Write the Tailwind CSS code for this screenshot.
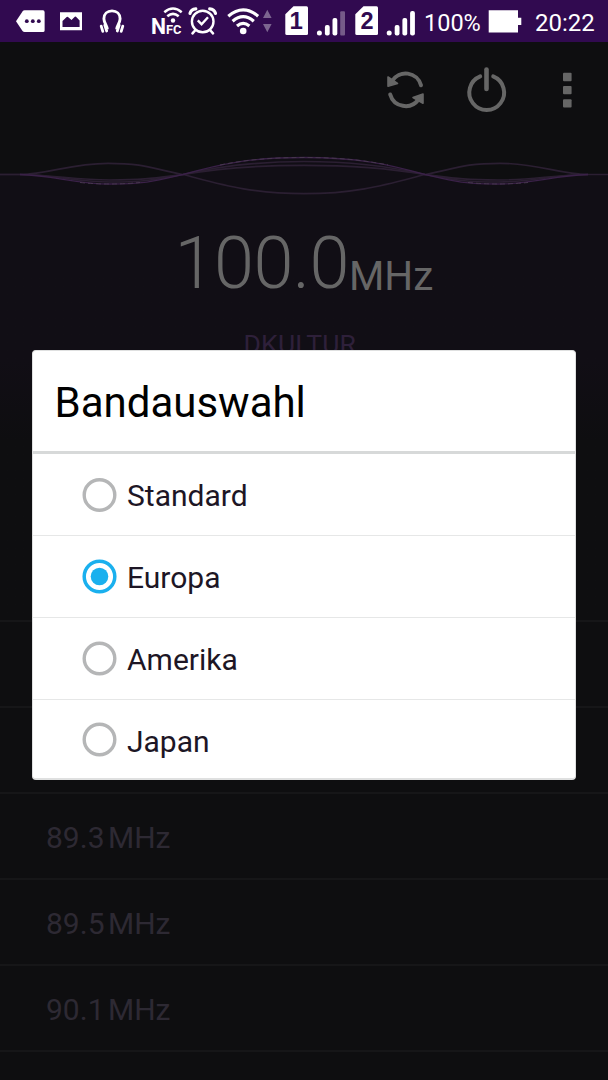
<!DOCTYPE html>
<html lang="de">
<head>
<meta charset="utf-8">
<title>UKW-Radio</title>
<script src="https://cdn.jsdelivr.net/npm/@tailwindcss/browser@4"></script>
</head>
<body class="w-[608px] h-[1080px] overflow-hidden bg-[#0e0e10] font-['Roboto',sans-serif]">
<div class="relative flex flex-col h-[1080px] overflow-hidden">
  <!-- Status bar -->
  <header class="flex h-[42px] shrink-0 bg-[#310a50] text-white">
    <svg class="shrink-0" width="140" height="42" viewBox="0 0 140 42" fill="none">
      <path d="M16 21.3 22.5 11.4Q23.3 10.3 24.6 10.3H43Q44.6 10.3 44.6 12V30.500Q44.600 32 43 32H24.600Q23.300 32 22.500 31Z" fill="#fff"/>
      <g fill="#310a50"><circle cx="26.800" cy="21.200" r="1.900"/><circle cx="32.800" cy="21.200" r="1.900"/><circle cx="38.800" cy="21.200" r="1.900"/></g>
      <path fill-rule="evenodd" d="M60 12.200H82V30.200H60ZM62.500 26.900H79.600V20.500L76 16.800Q75.400 16.300 74.800 16.800L71.500 20 68 17Q67.300 16.500 66.700 17L62.500 21Z" fill="#fff"/>
      <path d="M107.300 29.200C107.300 25.500 103.900 23 103.900 18.800C103.900 14 107.300 10.900 112 10.900S120.100 14 120.100 18.800C120.100 23 116.700 25.500 116.700 29.200" stroke="#fff" stroke-width="2.900"/>
      <path d="M104.800 25 106.700 31M101.200 26.200 102.800 31.400M119.200 25 117.300 31M122.800 26.200 121.200 31.400" stroke="#fff" stroke-width="2.800" stroke-linecap="round"/>
    </svg>
    <svg class="shrink-0" width="140" height="42" viewBox="140 0 140 42" fill="none" stroke="#fff">
      <text x="151" y="34" font-size="22" font-weight="700" fill="#fff" stroke="none" textLength="15" lengthAdjust="spacingAndGlyphs">N</text>
      <text x="166" y="34" font-size="13.500" font-weight="700" fill="#fff" stroke="none" textLength="15.500" lengthAdjust="spacingAndGlyphs">FC</text>
      <path d="M164.300 12.200Q173 4.800 181.700 12.200M167.300 16.300Q173 11.500 178.700 16.300" stroke-width="2.500"/>
      <circle cx="173" cy="20.500" r="2.200" fill="#fff" stroke="none"/>
      <circle cx="202.700" cy="21.500" r="10.800" stroke-width="2.400"/>
      <path d="M197.800 20.300 201.600 24.300 208 17.300" stroke-width="2.400"/>
      <path d="M195.500 30 192.500 33.300M210 30 213 33.300" stroke-width="2.600" stroke-linecap="round"/>
      <path d="M190 13.400Q191 9.300 195.800 8.900M215.500 13.400Q214.400 9.300 209.700 8.900" stroke-width="3.200" stroke-linecap="round"/>
      <path d="M228.300 16.200Q243.200 3.500 258.100 16.200M232.600 21.300Q243.200 12 253.800 21.300M237 26Q243.200 20.800 249.400 26" stroke-width="3.200"/>
      <circle cx="243.200" cy="31" r="3.300" fill="#fff" stroke="none"/>
      <path d="M263 18 267.300 9.800 271.600 18ZM263 24 267.300 32.200 271.600 24Z" fill="#7c6590" stroke="none"/>
    </svg>
    <svg class="shrink-0" width="144" height="42" viewBox="280 0 144 42" fill="#fff">
      <path d="M293.500 6.300H306.500Q308 6.300 308 7.800V33.500Q308 35 306.500 35H286.800Q285.300 35 285.300 33.500V14.300Z"/>
      <text x="296.300" y="29" font-size="24" font-weight="700" fill="#310a50" text-anchor="middle" font-family="Liberation Sans, sans-serif">1</text>
      <circle cx="319.400" cy="33" r="2.500"/>
      <rect x="324.900" y="25" width="4.800" height="10.500" rx="2"/><rect x="332.500" y="18" width="4.800" height="17.500" rx="2"/><rect x="340.200" y="11.300" width="4.800" height="24.200" rx="1" fill="#765b89"/>
      <path d="M363.500 6.300H376.500Q378 6.300 378 7.800V33.500Q378 35 376.500 35H356.800Q355.300 35 355.300 33.500V14.300Z"/>
      <text x="367" y="28.700" font-size="23.500" font-weight="700" fill="#310a50" text-anchor="middle" font-family="Liberation Sans, sans-serif">2</text>
      <circle cx="389.200" cy="33" r="2.500"/>
      <rect x="394.700" y="25" width="4.800" height="10.500" rx="2"/><rect x="402.400" y="18" width="4.800" height="17.500" rx="2"/><rect x="410.100" y="11" width="4.800" height="24.500" rx="2"/>
    </svg>
    <span class="w-[64px] text-[23.500px] leading-[46px] whitespace-nowrap">100%</span>
    <svg class="shrink-0" width="47" height="42" viewBox="488 0 47 42"><path d="M488.700 10.200H518V17.700H521.300V25H518V32.500H488.700Z" fill="#fff"/></svg>
    <span class="text-[24px] leading-[46px] whitespace-nowrap">20:22</span>
  </header>
  <!-- Toolbar -->
  <div class="flex h-[98px] shrink-0 justify-end">
    <svg width="238" height="98" viewBox="370 42 238 98" fill="none" stroke="#666" stroke-linecap="round">
      <path d="M392 81A16 16 0 0 1 421 85.200M390.200 94.500A16 16 0 0 0 418.500 99.500" stroke-width="4"/>
      <path d="M388 77V86.200L397.500 83.500ZM423 94V103.200L413 97.500Z" fill="#666" stroke-width="1.600" stroke-linejoin="round"/>
      <path d="M480.200 76.400A17.400 17.400 0 1 0 493.200 76.400" stroke-width="4"/>
      <path d="M486.500 69.500V89" stroke-width="4.600"/>
      <g fill="#666" stroke="none"><rect x="563" y="72.800" width="8.600" height="8.400" rx="1"/><rect x="563" y="85.900" width="8.600" height="8.400" rx="1"/><rect x="563" y="99.200" width="8.600" height="8.400" rx="1"/></g>
    </svg>
  </div>
  <!-- Wave -->
  <svg class="block shrink-0" width="608" height="80" viewBox="0 140 608 80" fill="none">
    <path d="M0 174.500H15C60 176 70 184 110 184C145 184 155 180 183 174.500C220 164 250 158 304 158S388 164 425 174.500C453 180 463 184 498 184C538 184 548 176 593 174.500H608V220H0Z" fill="#110e15"/>
    <g stroke="#2b1f32" stroke-width="1.700">
      <path d="M0 174.500H20C50 174 70 163.300 108 163.300S153 169 183 174.500C220 184 250 193.700 304 193.700S388 184 425 174.500C455 169 462 163.300 500 163.300S558 174 588 174.500H608"/>
      <path d="M0 174.500H20C55 175 75 180 110 180S155 178 183 174.500C220 168 255 165.300 304 165.300S388 168 425 174.500C453 178 463 180 498 180S553 175 588 174.500"/>
      <path d="M20 174.500C55 175 75 182 110 182S155 179.500 183 174.500C220 166 255 161.500 304 161.500S388 166 425 174.500C453 179.500 463 182 498 182S553 175 588 174.500"/>
    </g>
    <path d="M20 174.500C55 175.500 75 184 110 184S155 181 183 174.500C220 164 250 157.500 304 157.500S388 164 425 174.500C453 181 463 184 498 184S553 175.500 588 174.500" stroke="#3a2148" stroke-width="1.300"/>
    <path d="M220 165C245 160 270 157.500 304 157.500S363 160 388 165M80 182.500Q110 185.500 140 182.500M468 182.500Q498 185.500 528 182.500" stroke="#47374f" stroke-width="1" stroke-dasharray="5 3"/>
  </svg>
  <!-- Frequency -->
  <section class="flex flex-col items-start h-[400px] shrink-0 bg-linear-to-b from-[#110e15] from-35% to-[#0e0e10] to-55%">
    <div class="flex pl-[174.500px] h-[106px] text-[#666] whitespace-nowrap">
      <span class="w-[174.500px] text-[72px] leading-[88px] font-light tracking-[-0.5px]">100.0</span>
      <span class="pt-[10px] text-[40.500px] leading-[93px]">MHz</span>
    </div>
    <div class="pl-[243.500px] text-[26.500px] leading-[36px] tracking-[0.2px] text-[#2e203a]">DKULTUR</div>
  </section>
  <!-- Stations -->
  <ul class="flex flex-col text-[#2d2933] text-[30px]">
    <li class="h-[2px] bg-[#161618]"></li>
    <li class="h-[86px] border-b-2 border-[#161618]"></li>
    <li class="h-[86px] border-b-2 border-[#161618]"></li>
    <li class="flex h-[86px] shrink-0 items-center gap-1.5 border-b-2 border-[#161618] pl-[46px] pt-[2px]"><span class="w-[56px]">89.3</span><span>MHz</span></li>
    <li class="flex h-[86px] shrink-0 items-center gap-1.5 border-b-2 border-[#161618] pl-[46px] pt-[2px]"><span class="w-[56px]">89.5</span><span>MHz</span></li>
    <li class="flex h-[86px] shrink-0 items-center gap-1.5 border-b-2 border-[#161618] pl-[46px] pt-[2px]"><span class="w-[56px]">90.1</span><span>MHz</span></li>
  </ul>

  <!-- Dialog -->
  <div role="dialog" class="absolute left-[32px] top-[350px] flex h-[430px] w-[544px] flex-col overflow-hidden rounded-[4px] border border-[#dfe0e0] border-b-2 bg-white">
    <h1 class="h-[103px] shrink-0 border-b-[3px] border-[#d7d9d9] pl-[21.500px] text-[42px] leading-[103px] text-black">Bandauswahl</h1>
    <label class="flex h-[82px] shrink-0 items-center gap-2.5 border-b border-[#e6e7e7] pl-[49px] text-[30px] text-[#1d1625]">
      <svg class="w-[35px] shrink-0" height="35" viewBox="0 0 35 35" fill="none"><circle cx="17.500" cy="18" r="15.300" stroke="#b5b6b7" stroke-width="3.400"/></svg><span class="pt-[2px]">Standard</span></label>
    <label class="flex h-[82px] shrink-0 items-center gap-2.5 border-b border-[#e6e7e7] pl-[49px] text-[30px] text-[#1d1625]">
      <svg class="w-[35px] shrink-0" height="35" viewBox="0 0 35 35" fill="none"><circle cx="17.500" cy="17.500" r="15.300" stroke="#1ab0ee" stroke-width="3.500"/><circle cx="17.500" cy="17.500" r="8.800" fill="#1ab0ee"/></svg><span class="pt-[2px]">Europa</span></label>
    <label class="flex h-[81.500px] shrink-0 items-center gap-2.5 border-b border-[#e6e7e7] pl-[49px] text-[30px] text-[#1d1625]">
      <svg class="w-[35px] shrink-0" height="35" viewBox="0 0 35 35" fill="none"><circle cx="17.500" cy="17.500" r="15.300" stroke="#b5b6b7" stroke-width="3.400"/></svg><span class="pt-[3px]">Amerika</span></label>
    <label class="flex h-[80.500px] shrink-0 items-center gap-2.5 pl-[49px] text-[30px] text-[#1d1625]">
      <svg class="w-[35px] shrink-0" height="35" viewBox="0 0 35 35" fill="none"><circle cx="17.500" cy="17.500" r="15.300" stroke="#b5b6b7" stroke-width="3.400"/></svg><span class="pt-[3px]">Japan</span></label>
  </div>
</div>
</body>
</html>
